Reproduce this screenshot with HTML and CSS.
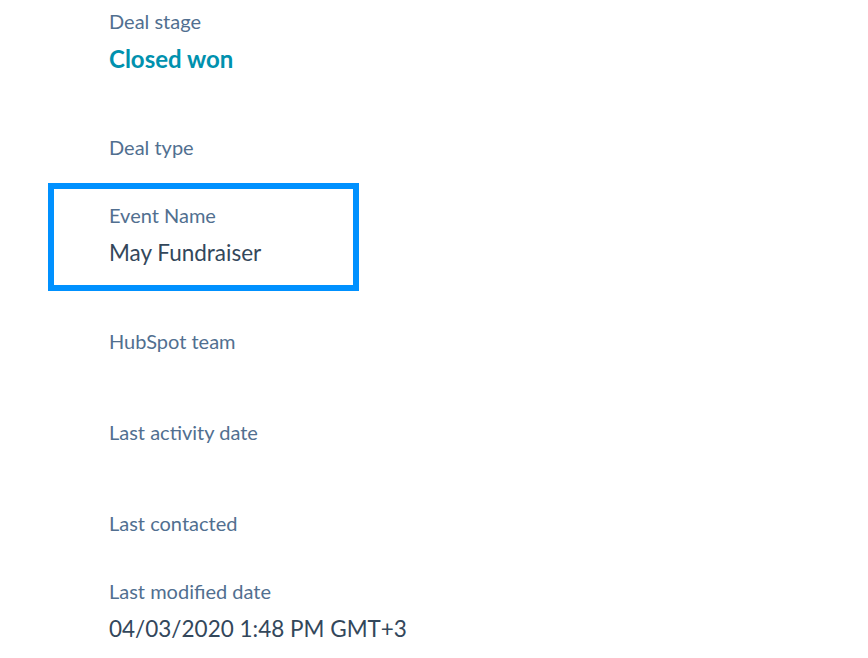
FILE: index.html
```html
<!DOCTYPE html>
<html lang="en">

<head>
   <meta charset="UTF-8">
   <meta name="viewport" content="width=device-width, initial-scale=1.0">
   <link rel="stylesheet" href="styles.css">
   <title>Deal properties</title>
</head>

<body>
   <main class="properties">

      <div class="field">
         <div class="label">Deal stage</div>
         <div class="value stage">Closed won</div>
      </div>

      <div class="field">
         <div class="label">Deal type</div>
      </div>

      <div class="field highlight">
         <div class="label">Event Name</div>
         <div class="value">May Fundraiser</div>
      </div>

      <div class="field">
         <div class="label">HubSpot team</div>
         <div class="blank"></div>
      </div>

      <div class="field">
         <div class="label">Last activity date</div>
         <div class="blank"></div>
      </div>

      <div class="field">
         <div class="label">Last contacted</div>
      </div>

      <div class="field">
         <div class="label">Last modified date</div>
         <div class="value">04/03/2020 1:48 PM GMT+3</div>
      </div>

   </main>
</body>

</html>
```

FILE: styles.css
```css
* {
   padding: 0;
   margin: 0;
   box-sizing: border-box;
}

body {
   font-family: Lato, "Noto Sans", sans-serif;
   background-color: #fff;
   color: #33475b;
}

.properties {
   padding: 9px 0 0 109px;
}

.field {
   display: flex;
   flex-direction: column;
   margin-bottom: 44px;
}

.field:last-child,
.field:last-child .value {
   margin-bottom: 0;
}

.label {
   font-size: 20px;
   line-height: 24px;
   color: #516f90;
}

.value {
   font-size: 22.5px;
   line-height: 30px;
   margin: 11px 0 17px;
   color: #33475b;
}

.value.stage {
   font-size: 24px;
   font-weight: 700;
   color: #0091ae;
}

.blank {
   height: 23px;
}

/* selected property gets a thick blue frame */
.highlight {
   width: 311px;
   margin: -20px 0 38px -61px;
   padding: 14px 0 0 55px;
   border: 6px solid #0091ff;
}
```
